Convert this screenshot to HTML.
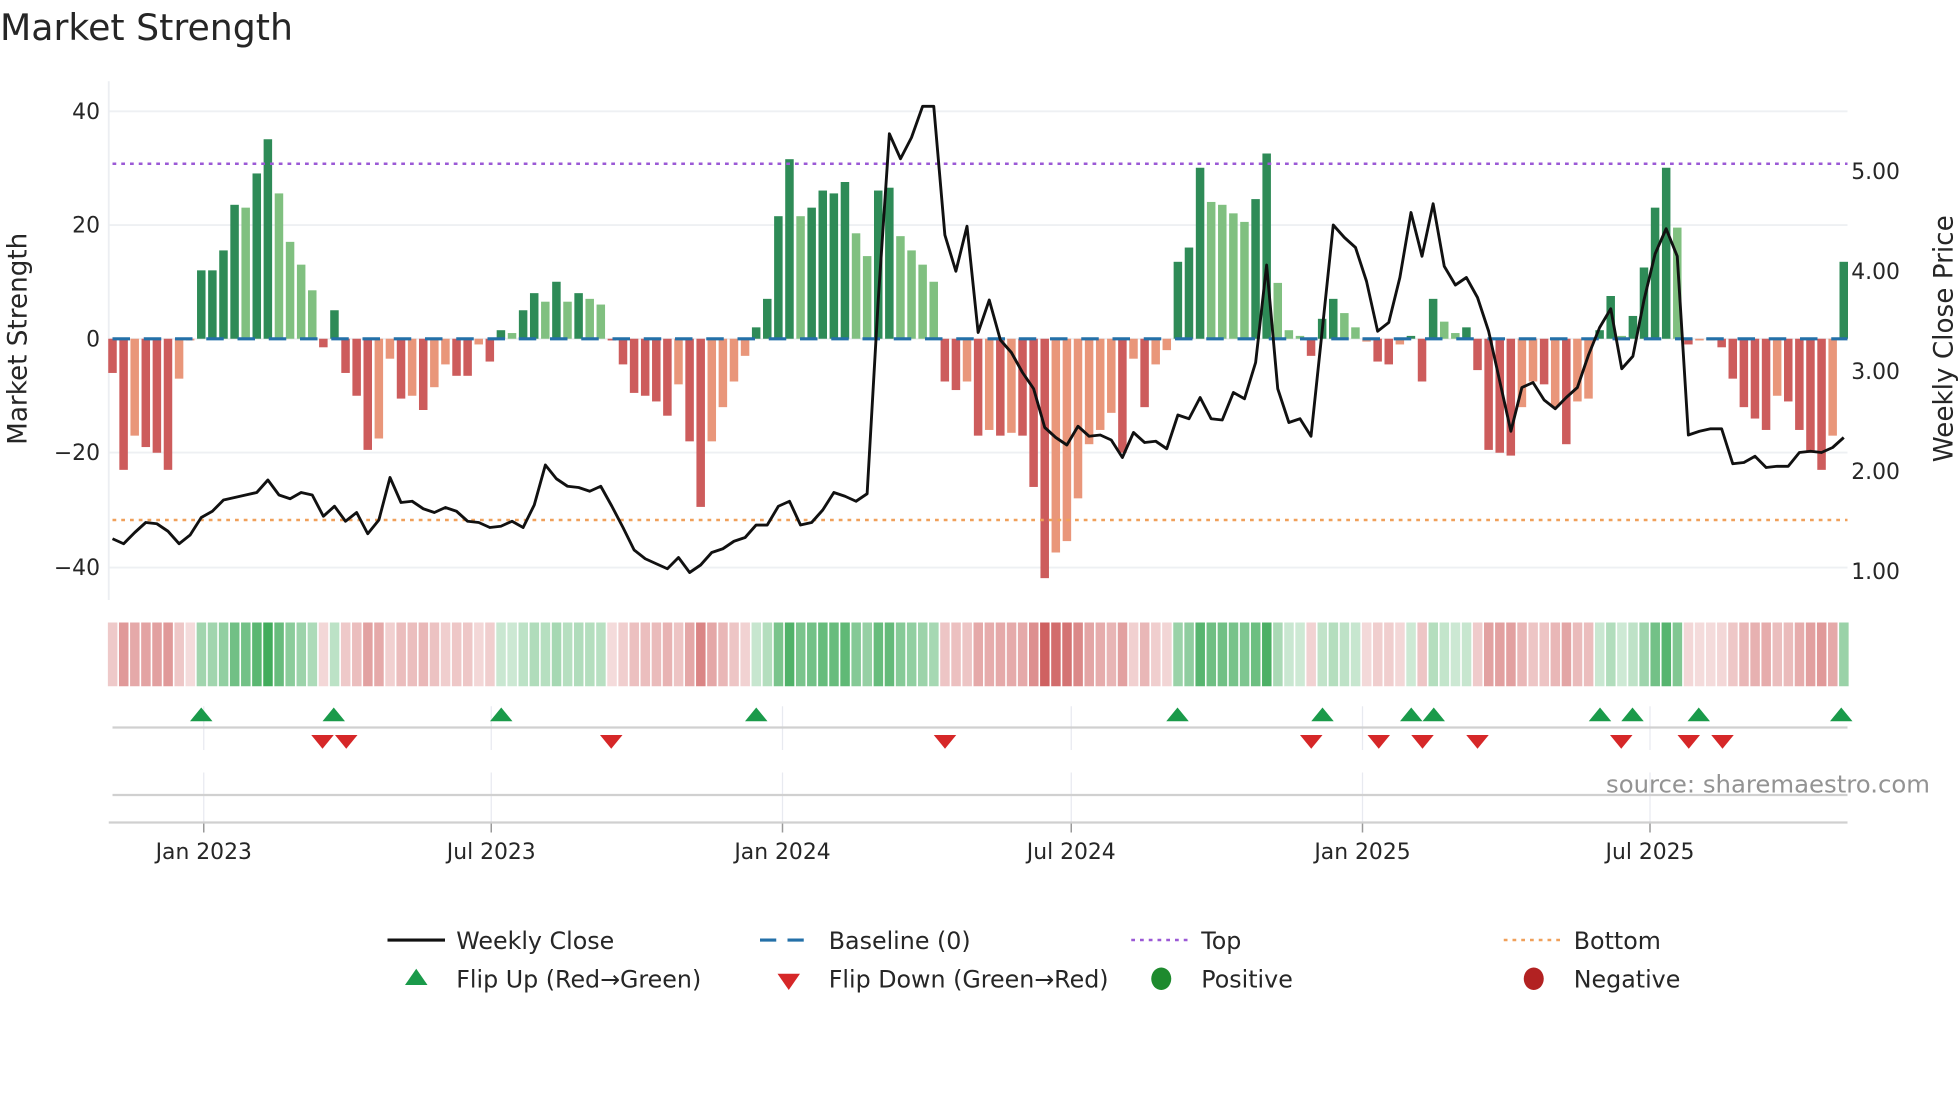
<!DOCTYPE html>
<html><head><meta charset="utf-8">
<style>
html,body{margin:0;padding:0;background:#fff;width:1960px;height:1102px;overflow:hidden}
svg{display:block}
text{font-family:"DejaVu Sans","Liberation Sans",sans-serif;fill:#262626}
</style></head><body>
<svg id="s" width="1960" height="1102" viewBox="0 0 1568 881.6" xmlns="http://www.w3.org/2000/svg">
<rect width="1568" height="882" fill="#fff"/>
<text x="0" y="32" font-size="29" fill="#333">Market Strength</text>
<g id="grid"></g>
<g id="bars"></g>
<line x1="90" y1="131" x2="1478" y2="131" stroke="#9b59d6" stroke-width="2" stroke-dasharray="3,4"/>
<line x1="90" y1="416" x2="1478" y2="416" stroke="#f0a05a" stroke-width="2" stroke-dasharray="3,4"/>
<line x1="90" y1="271" x2="1478" y2="271" stroke="#2470a8" stroke-width="2.5" stroke-dasharray="14,11"/>
<polyline id="price" fill="none" stroke="#111" stroke-width="2.3" stroke-linejoin="round"/>
<g id="heat"></g>
<g id="marks"></g>
<g font-size="17.5">
<text x="80" y="95" text-anchor="end">40</text>
<text x="80" y="186" text-anchor="end">20</text>
<text x="80" y="277" text-anchor="end">0</text>
<text x="80" y="368" text-anchor="end">−20</text>
<text x="80" y="460" text-anchor="end">−40</text>
<text x="1481" y="143">5.00</text>
<text x="1481" y="223">4.00</text>
<text x="1481" y="303">3.00</text>
<text x="1481" y="383">2.00</text>
<text x="1481" y="463">1.00</text>
<text x="163" y="687" text-anchor="middle">Jan 2023</text>
<text x="393" y="687" text-anchor="middle">Jul 2023</text>
<text x="626" y="687" text-anchor="middle">Jan 2024</text>
<text x="857" y="687" text-anchor="middle">Jul 2024</text>
<text x="1090" y="687" text-anchor="middle">Jan 2025</text>
<text x="1320" y="687" text-anchor="middle">Jul 2025</text>
</g>
<text transform="translate(21,271) rotate(-90)" font-size="21" text-anchor="middle" fill="#333">Market Strength</text>
<text transform="translate(1562,271) rotate(-90)" font-size="21" text-anchor="middle" fill="#333">Weekly Close Price</text>
<text x="1544" y="634" font-size="19.5" text-anchor="end" fill="#939393" style="fill:#939393">source: sharemaestro.com</text>
<g font-size="19">
<line x1="310" y1="752" x2="356" y2="752" stroke="#111" stroke-width="2.5"/>
<text x="365" y="759">Weekly Close</text>
<line x1="608" y1="752" x2="652" y2="752" stroke="#2470a8" stroke-width="2.5" stroke-dasharray="13,9"/>
<text x="663" y="759">Baseline (0)</text>
<line x1="905" y1="752" x2="950" y2="752" stroke="#9b59d6" stroke-width="2" stroke-dasharray="3,4"/>
<text x="961" y="759">Top</text>
<line x1="1203" y1="752" x2="1248" y2="752" stroke="#f0a05a" stroke-width="2" stroke-dasharray="3,4"/>
<text x="1259" y="759">Bottom</text>
<polygon points="333,775 324,788 342,788" fill="#1a9a4a"/>
<text x="365" y="790">Flip Up (Red→Green)</text>
<polygon points="622,779 640,779 631,792" fill="#d62728"/>
<text x="663" y="790">Flip Down (Green→Red)</text>
<ellipse cx="929" cy="783" rx="8" ry="9" fill="#1e8a2e"/>
<text x="961" y="790">Positive</text>
<ellipse cx="1227" cy="783" rx="8" ry="9" fill="#b22222"/>
<text x="1259" y="790">Negative</text>
</g>
</svg>
<script>
(function(){
var NS="http://www.w3.org/2000/svg";
function el(p,n,a){var e=document.createElementNS(NS,n);for(var k in a)e.setAttribute(k,a[k]);p.appendChild(e);return e;}
var g=document.getElementById('grid');
[89,180,271,362,454].forEach(function(y){el(g,'line',{x1:87,y1:y,x2:1478,y2:y,stroke:'#eef0f3','stroke-width':1.5});});
[163,393,626,857,1090,1320].forEach(function(x){
 el(g,'line',{x1:x,y1:565,x2:x,y2:600,stroke:'#e8eaf0','stroke-width':1});
 el(g,'line',{x1:x,y1:618,x2:x,y2:658,stroke:'#e8eaf0','stroke-width':1});
 el(g,'line',{x1:x,y1:658,x2:x,y2:666,stroke:'#999','stroke-width':1.2});
});
el(g,'line',{x1:87,y1:65,x2:87,y2:480,stroke:'#eceef2','stroke-width':1.5});
el(g,'line',{x1:90,y1:582,x2:1478,y2:582,stroke:'#d0d0d0','stroke-width':1.8});
el(g,'line',{x1:90,y1:636,x2:1478,y2:636,stroke:'#d0d0d0','stroke-width':1.8});
el(g,'line',{x1:87,y1:658,x2:1478,y2:658,stroke:'#d0d0d0','stroke-width':1.8});
var B=[[-6,1],[-23,1],[-17,0],[-19,1],[-20,1],[-23,1],[-7,0],[-0.3,0],[12,1],[12,1],[15.5,1],[23.5,1],[23,0],[29,1],[35,1],[25.5,0],[17,0],[13,0],[8.5,0],[-1.5,1],[5,1],[-6,1],[-10,1],[-19.5,1],[-17.5,0],[-3.5,0],[-10.5,1],[-10,0],[-12.5,1],[-8.5,0],[-4.5,0],[-6.5,1],[-6.5,1],[-1,0],[-4,1],[1.5,1],[1,0],[5,1],[8,1],[6.5,0],[10,1],[6.5,0],[8,1],[7,0],[6,0],[-0.3,1],[-4.5,1],[-9.5,1],[-10,1],[-11,1],[-13.5,1],[-8,0],[-18,1],[-29.5,1],[-18,0],[-12,0],[-7.5,0],[-3,0],[2,1],[7,1],[21.5,1],[31.5,1],[21.5,0],[23,1],[26,1],[25.5,1],[27.5,1],[18.5,0],[14.5,0],[26,1],[26.5,1],[18,0],[15.5,0],[13,0],[10,0],[-7.5,1],[-9,1],[-7.5,0],[-17,1],[-16,0],[-17,1],[-16.5,0],[-17,1],[-26,1],[-42,1],[-37.5,0],[-35.5,0],[-28,0],[-18.5,0],[-16,0],[-13,0],[-20,1],[-3.5,0],[-12,1],[-4.5,0],[-2,0],[13.5,1],[16,1],[30,1],[24,0],[23.5,0],[22,0],[20.5,0],[24.5,1],[32.5,1],[9.8,0],[1.5,0],[0.5,0],[-3,1],[3.5,1],[7,1],[4.5,0],[2,0],[-0.5,0],[-4,1],[-4.5,1],[-1,0],[0.5,1],[-7.5,1],[7,1],[3,0],[1,0],[2,1],[-5.5,1],[-19.5,1],[-20,1],[-20.5,1],[-12,0],[-7.5,0],[-8,1],[-12,0],[-18.5,1],[-11,0],[-10.5,0],[1.5,1],[7.5,1],[0.5,0],[4,1],[12.5,1],[23,1],[30,1],[19.5,0],[-1,1],[-0.3,0],[-0.3,0],[-1.5,1],[-7,1],[-12,1],[-14,1],[-16,1],[-10,0],[-11,1],[-16,1],[-20,1],[-23,1],[-17,0],[13.5,1]];
var P=[431,435,426,418,419,425,435,428,414,409,400,398,396,394,384,396,399,394,396,413,405,417,410,427,416,382,402,401,407,410,406,409,417,418,422,421,417,422,404,372,383,389,390,393,389,405,422,440,447,451,455,446,458,452,442,439,433,430,420,420,405,401,420,418,408,394,397,401,395,240,107,127,110,85,85,188,217,181,266,240,272,282,298,311,342,350,356,341,349,348,352,366,346,354,353,359,332,335,318,335,336,314,319,290,212,311,338,335,349,265,180,190,198,225,265,258,222,170,205,163,213,228,222,238,265,305,345,310,306,320,327,318,310,284,262,247,295,285,240,203,183,205,348,345,343,343,371,370,365,374,373,373,362,361,362,358,350];
var n=B.length, step=(1475-90)/(n-1);
var bars=document.getElementById('bars'), heat=document.getElementById('heat');
B.forEach(function(b,i){
 var x=90+i*step,v=b[0],h=Math.abs(v)*4.56,y=v>=0?271-h:271;
 var c=v>=0?(b[1]?'#2e8b57':'#80c080'):(b[1]?'#cd5c5c':'#e9967a');
 el(bars,'rect',{x:x-3.4,y:y,width:6.8,height:Math.max(h,0.8),fill:c});
 var a=v>=0?Math.min(0.95,0.22+Math.abs(v)/40*0.75):Math.min(0.9,0.2+Math.abs(v)/40*0.65);
 var hc=v>=0?'rgba(40,160,70,'+a.toFixed(2)+')':'rgba(200,75,75,'+a.toFixed(2)+')';
 el(heat,'rect',{x:x-3.7,y:498,width:7.6,height:51,fill:hc});
});
var pts=P.map(function(y,i){return (90+i*step).toFixed(1)+','+y;}).join(' ');
document.getElementById('price').setAttribute('points',pts);
var m=document.getElementById('marks');
[161,267,401,605,942,1058,1129,1147,1280,1306,1359,1473].forEach(function(x){
 el(m,'polygon',{points:(x)+',566 '+(x-9)+',577 '+(x+9)+',577',fill:'#1a9a4a'});});
[258,277,489,756,1049,1103,1138,1182,1297,1351,1378].forEach(function(x){
 el(m,'polygon',{points:(x-9)+',588 '+(x+9)+',588 '+x+',599',fill:'#d62728'});});
})();
</script>
</body></html>
